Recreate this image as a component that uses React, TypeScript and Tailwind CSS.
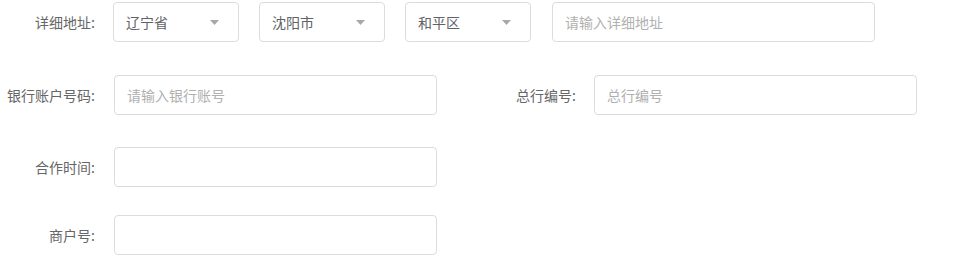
const font = { fontFamily: '"Noto Sans CJK SC", "Noto Sans", sans-serif' };

function Label({ text }: { text: string }) {
  return (
    <div className="w-[95px] shrink-0 text-right text-[14px] text-[#666666]">{text}</div>
  );
}

function Select({ value }: { value: string }) {
  return (
    <div className="flex h-10 w-[126px] items-center justify-between rounded border border-[#dcdcdc] bg-white pl-3 pr-[19px] text-[14px] text-[#606266]">
      <span>{value}</span>
      <svg width="9" height="5" viewBox="0 0 9 5" className="text-[#a8a8a8]">
        <path d="M0 0 L9 0 L4.5 5 Z" fill="currentColor" />
      </svg>
    </div>
  );
}

function Input({ placeholder }: { placeholder?: string }) {
  return (
    <input
      placeholder={placeholder}
      className="h-10 w-[323px] rounded border border-[#dcdcdc] bg-white px-3 text-[14px] text-[#606266] outline-none placeholder:text-[#b0b0b0]"
    />
  );
}

export default function App() {
  return (
    <div className="h-[278px] w-[968px] bg-white pt-[2px]" style={font}>
      <div className="flex items-center">
        <Label text="详细地址:" />
        <div className="ml-[18px] flex items-center gap-[20px]">
          <Select value="辽宁省" />
          <Select value="沈阳市" />
          <Select value="和平区" />
          <div className="ml-[1px]">
            <Input placeholder="请输入详细地址" />
          </div>
        </div>
      </div>

      <div className="mt-[33px] flex items-center">
        <Label text="银行账户号码:" />
        <div className="ml-[19px]">
          <Input placeholder="请输入银行账号" />
        </div>
        <div className="ml-[44px] flex items-center">
          <Label text="总行编号:" />
          <div className="ml-[18px]">
            <Input placeholder="总行编号" />
          </div>
        </div>
      </div>

      <div className="mt-[32px] flex items-center">
        <Label text="合作时间:" />
        <div className="ml-[19px]">
          <Input />
        </div>
      </div>

      <div className="mt-[28px] flex items-center">
        <Label text="商户号:" />
        <div className="ml-[19px]">
          <Input />
        </div>
      </div>
    </div>
  );
}
